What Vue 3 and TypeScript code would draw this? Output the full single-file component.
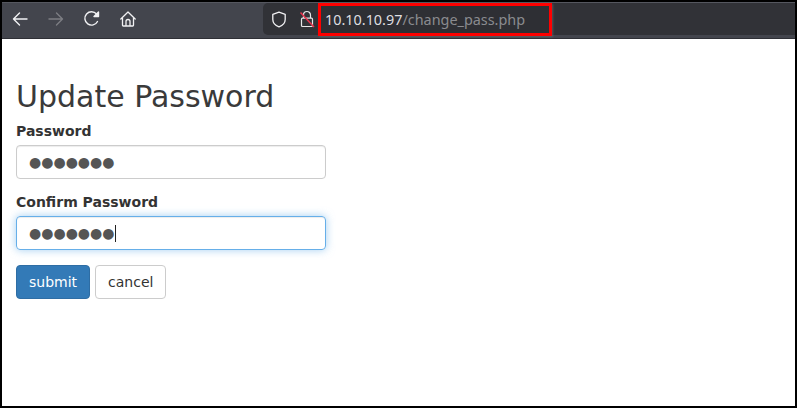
<script setup lang="ts">
const dots = '●●●●●●●'
</script>

<template>
  <div class="frame">
    <header class="toolbar">
      <nav class="nav">
        <svg class="ico" width="18" height="18" viewBox="0 0 18 18" fill="none" stroke="#f1f1f3" stroke-width="1.4" stroke-linecap="round" stroke-linejoin="round"><path d="M16 9H2.5M8.5 3L2.5 9l6 6" /></svg>
        <svg class="ico" width="18" height="18" viewBox="0 0 18 18" fill="none" stroke="#7d7e83" stroke-width="1.4" stroke-linecap="round" stroke-linejoin="round"><path d="M2 9h13.5M9.5 3l6 6-6 6" /></svg>
        <svg class="ico" width="18" height="18" viewBox="0 0 18 18" fill="none" stroke="#f1f1f3" stroke-width="1.4" stroke-linecap="round" stroke-linejoin="round"><path d="M14.5 11.5A6.7 6.7 0 1 1 13.6 4" /><path d="M15.5 2v4.5H11z" fill="#f1f1f3" /></svg>
        <svg class="ico" width="18" height="18" viewBox="0 0 18 18" fill="none" stroke="#f1f1f3" stroke-width="1.3" stroke-linecap="round" stroke-linejoin="round"><path d="M1.8 9L9 2l7.2 7M3.5 8v7.2a.8.8 0 0 0 .8.8h9.4a.8.8 0 0 0 .8-.8V8M7 16v-4.5a2 2 0 0 1 4 0V16" /></svg>
      </nav>
      <div class="urlbar">
        <svg class="shield" width="16" height="17" viewBox="0 0 16 17" fill="none" stroke="#f1f1f3" stroke-width="1.3" stroke-linejoin="round"><path d="M8 1.2l6.2 2.1v5.2c0 3.6-2.7 6-6.2 7.3-3.5-1.3-6.2-3.7-6.2-7.3V3.3z" /></svg>
        <svg class="lock" width="17" height="18" viewBox="0 0 17 18" fill="none"><path d="M5.5 8V5a3.5 3.5 0 0 1 7 0v3M3.5 9.2a1 1 0 0 1 1-1h9a1 1 0 0 1 1 1v6.3a1 1 0 0 1-1 1h-9a1 1 0 0 1-1-1z" stroke="#e6e6e8" stroke-width="1.2" stroke-linejoin="round" /><path d="M2.5 2.5l13.5 14.5" stroke="#e8324c" stroke-width="1.5" /></svg>
        <div class="address"><span class="host">10.10.10.97</span><span class="path">/change_pass.php</span></div>
      </div>
    </header>
    <main class="page">
      <h1 class="title">Update Password</h1>
      <form class="form" @submit.prevent>
        <div class="group">
          <div class="label">Password</div>
          <div class="input"><span class="dots">{{ dots }}</span></div>
        </div>
        <div class="group">
          <div class="label">Confirm Password</div>
          <div class="input focus"><span class="dots">{{ dots }}</span><span class="caret"></span></div>
        </div>
        <div class="actions">
          <button class="btn primary" type="button">submit</button>
          <button class="btn" type="button">cancel</button>
        </div>
      </form>
    </main>
  </div>
</template>

<style>
html, body { margin: 0; padding: 0; background: #fff; }
</style>

<style scoped>
.frame {
  box-sizing: border-box;
  width: 797px;
  height: 408px;
  border: 2px solid #000;
  background: #fff;
  overflow: hidden;
  font-family: "DejaVu Sans", sans-serif;
  color: #333;
  display: flex;
  flex-direction: column;
}
.toolbar {
  height: 37px;
  flex: none;
  background: #43454d;
  border-top: 1px solid #55575f;
  border-bottom: 1px solid #2f3036;
  box-sizing: border-box;
  display: flex;
  align-items: flex-start;
}
.nav {
  display: flex;
  align-items: center;
  gap: 18px;
  padding: 7px 0 0 9px;
  width: 261px;
  box-sizing: border-box;
}
.ico { display: block; }
.urlbar {
  flex: 1;
  height: 32px;
  background: #313237;
  border-radius: 5px 0 0 5px;
  display: flex;
  align-items: center;
  padding-left: 8px;
  box-sizing: border-box;
}
.shield { margin: 1px 6px 0 0; }
.lock { margin-left: 5px; }
.address {
  align-self: flex-start;
  margin-left: 3px;
  box-sizing: border-box;
  flex: none;
  width: 234px;
  height: 33px;
  border: 3px solid #f00;
  background: #2e2f34;
  box-shadow: 1px 1px 2px rgba(130, 130, 135, 0.45);
  padding-left: 4px;
  line-height: 27px;
  font-family: "Noto Sans", sans-serif;
  font-size: 14.4px;
  white-space: nowrap;
  position: relative;
}
.host { color: #dedee0; }
.path { color: #8a8b8f; }
.page { padding: 0 14px; flex: 1; }
.title {
  margin: 41px 0 8px;
  font-size: 30px;
  font-weight: 400;
  line-height: 33px;
  color: #3a3a3a;
}
.form { width: 310px; }
.group { margin-bottom: 13px; }
.label {
  font-size: 14px;
  font-weight: 700;
  line-height: 20px;
  margin-bottom: 4px;
}
.input {
  box-sizing: border-box;
  height: 34px;
  border: 1px solid #ccc;
  border-radius: 4px;
  padding: 0 12px;
  display: flex;
  align-items: center;
  color: #555;
  font-size: 14px;
  box-shadow: inset 0 1px 1px rgba(0, 0, 0, 0.075);
}
.input.focus {
  border-color: #66afe9;
  box-shadow: inset 0 1px 1px rgba(0, 0, 0, 0.075), 0 0 8px rgba(102, 175, 233, 0.6);
}
.caret { width: 1px; height: 17px; background: #222; }
.actions { display: flex; gap: 5px; margin-top: 15px; }
.btn {
  box-sizing: border-box;
  height: 34px;
  padding: 0 12px;
  border: 1px solid #ccc;
  border-radius: 4px;
  background: #fff;
  color: #333;
  font: 14px "DejaVu Sans", sans-serif;
}
.btn.primary {
  background: #337ab7;
  border-color: #2e6da4;
  color: #fff;
}
</style>
